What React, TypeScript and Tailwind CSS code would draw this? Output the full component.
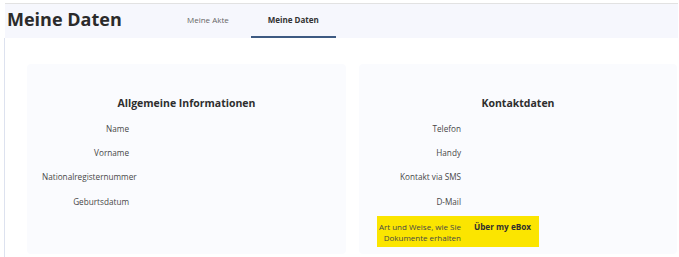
import React from 'react';

const font = { fontFamily: '"Open Sans", "DejaVu Sans", sans-serif' };

const personal = ['Name', 'Vorname', 'Nationalregisternummer', 'Geburtsdatum'];
const contact = ['Telefon', 'Handy', 'Kontakt via SMS', 'D-Mail'];

const Row: React.FC<{ label: string }> = ({ label }) => (
  <div className="flex h-[24.4px] items-center pl-[15px]">
    <span className="w-[87px] shrink-0 whitespace-nowrap text-right text-[8.2px] leading-[11px] text-[#474747]">
      {label}
    </span>
  </div>
);

const Card: React.FC<{ title: string; children: React.ReactNode }> = ({ title, children }) => (
  <div className="rounded-[4px] bg-[#fafbfe] pt-[32px] pb-[7px]">
    <h3 className="mb-[6px] text-center text-[10.5px] font-bold leading-[14px] text-[#2e2e2e]">{title}</h3>
    {children}
  </div>
);

export default function App() {
  return (
    <div className="min-h-[257px] bg-white pt-[3px]" style={font}>
      {/* Header */}
      <div className="ml-[5px] mr-[1px] flex h-[35px] border-t border-[#e2e2e2] bg-[#f6f7fd]">
        <h1 className="-mt-[3px] flex w-[165px] items-center pl-[2px] text-[18px] font-bold text-[#2b2b2b]">
          Meine Daten
        </h1>
        <div className="flex gap-[5px]">
          <div className="flex items-center border-b-2 border-transparent px-[17px] text-[8px] text-[#666]">
            Meine Akte
          </div>
          <div className="flex items-center border-b-2 border-[#3d5a82] px-[17px] text-[8px] font-bold text-[#333]">
            Meine Daten
          </div>
        </div>
      </div>

      {/* Content */}
      <div className="ml-[4px] min-h-[219px] border-l border-[#dde2ef] pl-[22px] pt-[26px]">
        <div className="grid grid-cols-[319px_318px] gap-[13px]">
          <Card title="Allgemeine Informationen">
            {personal.map((l) => (
              <Row key={l} label={l} />
            ))}
          </Card>
          <Card title="Kontaktdaten">
            {contact.map((l) => (
              <Row key={l} label={l} />
            ))}
            <div className="ml-[18px] mt-[2px] flex h-[31px] w-[162px] bg-[#fbe500] pt-[5px]">
              <span className="w-[84px] shrink-0 text-right text-[8px] leading-[11.5px] text-[#474747]">
                Art und Weise, wie Sie Dokumente erhalten
              </span>
              <span className="ml-[13px] text-[8.2px] font-bold leading-[11.5px] text-[#2e2e2e]">Über my eBox</span>
            </div>
          </Card>
        </div>
      </div>
    </div>
  );
}
